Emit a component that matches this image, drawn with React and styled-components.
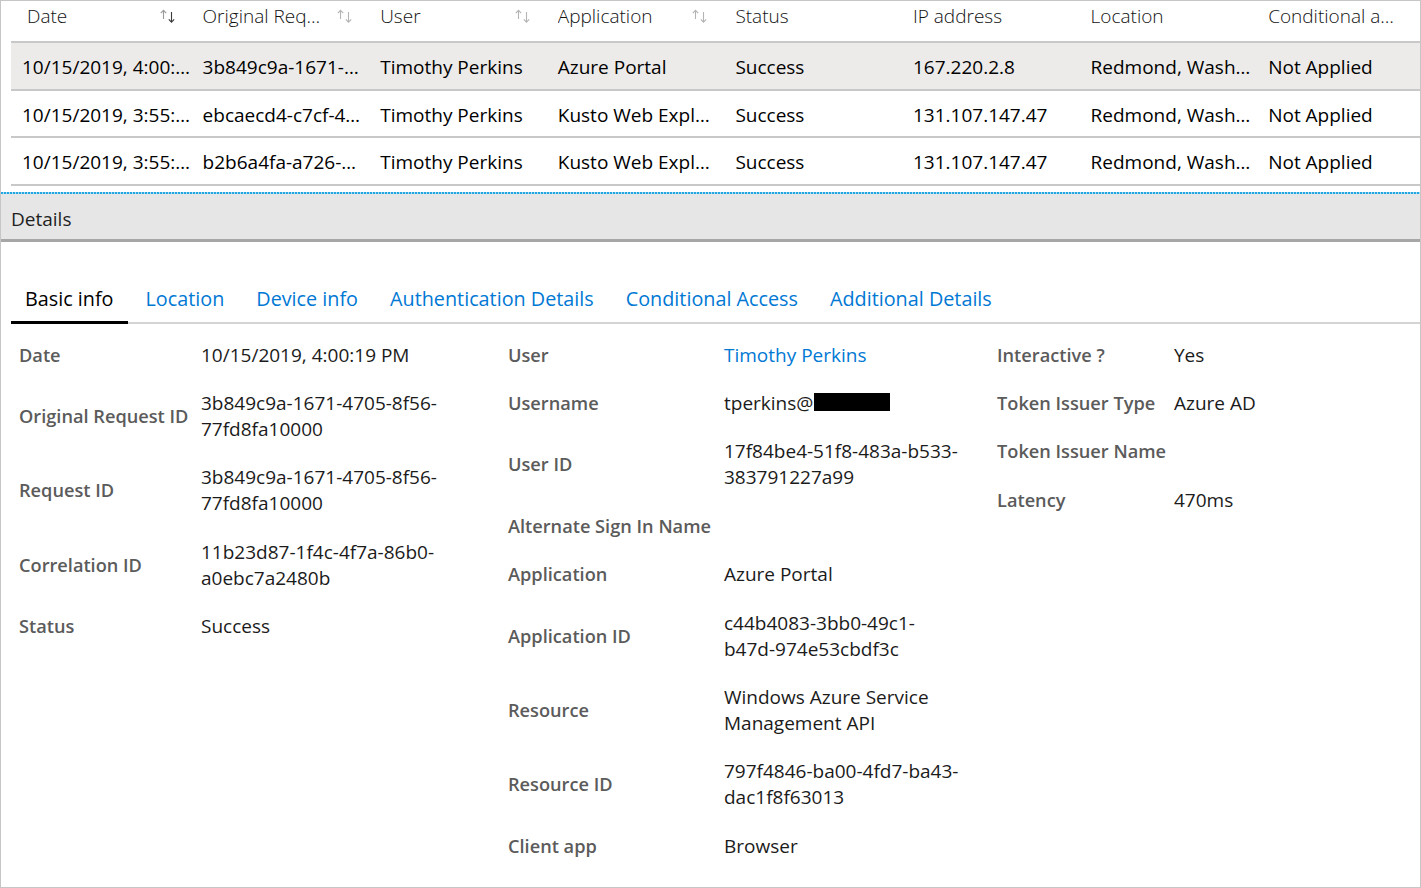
import React from 'react';
import styled, { createGlobalStyle } from 'styled-components';

const Global = createGlobalStyle`
  html, body { margin: 0; padding: 0; background: #fff; }
  body { font-family: "Open Sans", "Noto Sans", sans-serif; }
  * { box-sizing: border-box; }
`;

const Frame = styled.div`
  width: 1421px;
  height: 888px;
  border: 1px solid #c6c6c6;
  overflow: hidden;
  display: flex;
  flex-direction: column;
  background: #fff;
`;

const Table = styled.div`
  margin-left: 10px;
  display: flex;
  flex-direction: column;
  overflow: hidden;
`;

const Row = styled.div`
  display: grid;
  grid-template-columns: repeat(8, 177.6px);
  height: ${(p) => (p.$header ? '42px' : '47.5px')};
  border-bottom: 2px solid #c8c8c8;
  background: ${(p) => (p.$selected ? '#edebe9' : 'transparent')};
  align-items: ${(p) => (p.$header ? 'start' : 'center')};
`;

const HeadCell = styled.div`
  display: flex;
  align-items: flex-start;
  padding: 2px 13px 0 ${(p) => (p.$first ? '16px' : '14px')};
  font-size: 19px;
  line-height: 26px;
  font-weight: 300;
  color: #111;
  min-width: 0;
`;

const HeadText = styled.span`
  flex: 1;
  white-space: nowrap;
  overflow: hidden;
`;

const SortIcon = styled.svg`
  flex: none;
  margin-top: 6px;
  width: 16px;
  height: 14px;
`;

const Cell = styled.div`
  padding: 3px 0 0 ${(p) => (p.$first ? '11px' : '14px')};
  font-size: 19px;
  line-height: 26px;
  color: #000;
  white-space: nowrap;
  min-width: 0;
`;

const FocusRule = styled.div`
  margin-top: 6px;
  height: 2px;
  flex: none;
  background: repeating-linear-gradient(90deg, #22a7e0 0 2px, #a9dcf3 2px 3px);
`;

const DetailsBar = styled.div`
  flex: none;
  height: 48px;
  display: flex;
  align-items: center;
  padding: 6px 10px 0;
  background: #e6e6e6;
  border-bottom: 3px solid #a6a6a6;
  font-size: 19px;
  line-height: 26px;
  color: #1f1f1f;
`;

const TabList = styled.div`
  display: flex;
  gap: 4px;
  margin: 40px 0 0 10px;
  border-bottom: 2px solid #d4d4d4;
`;

const Tab = styled.div`
  position: relative;
  padding: 4px 14px 10px;
  font-size: 19.8px;
  line-height: 26px;
  color: ${(p) => (p.$active ? '#000' : '#0078d4')};
  white-space: nowrap;
  &::after {
    content: '';
    display: ${(p) => (p.$active ? 'block' : 'none')};
    position: absolute;
    left: 0;
    right: 0;
    bottom: -2px;
    height: 3px;
    background: #000;
  }
`;

const Body = styled.div`
  display: flex;
  padding: 7px 0 0 18px;
`;

const Column = styled.div`
  flex: ${(p) => (p.$w ? `0 0 ${p.$w}px` : '1')};
  display: flex;
  flex-direction: column;
`;

const Field = styled.div`
  display: grid;
  grid-template-columns: ${(p) => p.$label}px 1fr;
  align-items: center;
  padding: 11.2px 0;
  font-size: 19px;
  line-height: 26px;
`;

const Label = styled.div`
  font-size: 18.2px;
  font-weight: 600;
  color: #5b5b5b;
  white-space: nowrap;
`;

const Value = styled.div`
  color: #1b1b1b;
  padding-right: 16px;
`;

const Link = styled.span`
  color: #0078d4;
`;

const Redacted = styled.span`
  display: inline-block;
  width: 76px;
  height: 18px;
  margin-left: 1px;
  background: #000;
  vertical-align: -1px;
`;

const Sort = ({ active }) => (
  <SortIcon viewBox="0 0 16 14" fill="none" strokeWidth="1.1">
    <g stroke={active ? '#9a9a9a' : '#b4b4b4'}>
      <path d="M3.5 1.5 V10" />
      <path d="M0.8 4.2 L3.5 1.3 L6.2 4.2" />
    </g>
    <g stroke={active ? '#3a3a3a' : '#b4b4b4'}>
      <path d="M11.5 3 V13" />
      <path d="M8.8 10.3 L11.5 13.2 L14.2 10.3" />
    </g>
  </SortIcon>
);

const headers = [
  { t: 'Date', sort: true, active: true },
  { t: 'Original Req…', sort: true },
  { t: 'User', sort: true },
  { t: 'Application', sort: true },
  { t: 'Status' },
  { t: 'IP address' },
  { t: 'Location' },
  { t: 'Conditional a…' },
];

const rows = [
  ['10/15/2019, 4:00:…', '3b849c9a-1671-…', 'Timothy Perkins', 'Azure Portal', 'Success', '167.220.2.8', 'Redmond, Wash…', 'Not Applied'],
  ['10/15/2019, 3:55:…', 'ebcaecd4-c7cf-4…', 'Timothy Perkins', 'Kusto Web Expl…', 'Success', '131.107.147.47', 'Redmond, Wash…', 'Not Applied'],
  ['10/15/2019, 3:55:…', 'b2b6a4fa-a726-…', 'Timothy Perkins', 'Kusto Web Expl…', 'Success', '131.107.147.47', 'Redmond, Wash…', 'Not Applied'],
];

const tabs = ['Basic info', 'Location', 'Device info', 'Authentication Details', 'Conditional Access', 'Additional Details'];

const Lines = ({ lines }) => (
  <>
    {lines.map((l, i) => (
      <React.Fragment key={i}>
        {i > 0 && <br />}
        {l}
      </React.Fragment>
    ))}
  </>
);

const col1 = [
  ['Date', ['10/15/2019, 4:00:19 PM']],
  ['Original Request ID', ['3b849c9a-1671-4705-8f56-', '77fd8fa10000']],
  ['Request ID', ['3b849c9a-1671-4705-8f56-', '77fd8fa10000']],
  ['Correlation ID', ['11b23d87-1f4c-4f7a-86b0-', 'a0ebc7a2480b']],
  ['Status', ['Success']],
];

const col2 = [
  ['User', 'link'],
  ['Username', 'redacted'],
  ['User ID', ['17f84be4-51f8-483a-b533-', '383791227a99']],
  ['Alternate Sign In Name', ['']],
  ['Application', ['Azure Portal']],
  ['Application ID', ['c44b4083-3bb0-49c1-', 'b47d-974e53cbdf3c']],
  ['Resource', ['Windows Azure Service', 'Management API']],
  ['Resource ID', ['797f4846-ba00-4fd7-ba43-', 'dac1f8f63013']],
  ['Client app', ['Browser']],
];

const col3 = [
  ['Interactive ?', ['Yes']],
  ['Token Issuer Type', ['Azure AD']],
  ['Token Issuer Name', ['']],
  ['Latency', ['470ms']],
];

const renderValue = (v) => {
  if (v === 'link') return <Link>Timothy Perkins</Link>;
  if (v === 'redacted')
    return (
      <>
        tperkins@<Redacted />
      </>
    );
  return <Lines lines={v} />;
};

const FieldColumn = ({ items, labelW, w }) => (
  <Column $w={w}>
    {items.map(([label, value]) => (
      <Field key={label} $label={labelW}>
        <Label>{label}</Label>
        <Value>{renderValue(value)}</Value>
      </Field>
    ))}
  </Column>
);

export default function App() {
  return (
    <>
      <Global />
      <Frame>
        <Table>
          <Row $header>
            {headers.map((h, i) => (
              <HeadCell key={h.t} $first={i === 0}>
                <HeadText>{h.t}</HeadText>
                {h.sort && <Sort active={h.active} />}
              </HeadCell>
            ))}
          </Row>
          {rows.map((r, ri) => (
            <Row key={ri} $selected={ri === 0}>
              {r.map((c, ci) => (
                <Cell key={ci} $first={ci === 0}>
                  {c}
                </Cell>
              ))}
            </Row>
          ))}
        </Table>
        <FocusRule />
        <DetailsBar>Details</DetailsBar>
        <TabList>
          {tabs.map((t, i) => (
            <Tab key={t} $active={i === 0}>
              {t}
            </Tab>
          ))}
        </TabList>
        <Body>
          <FieldColumn items={col1} labelW={182} w={489} />
          <FieldColumn items={col2} labelW={216} w={489} />
          <FieldColumn items={col3} labelW={177} />
        </Body>
      </Frame>
    </>
  );
}
